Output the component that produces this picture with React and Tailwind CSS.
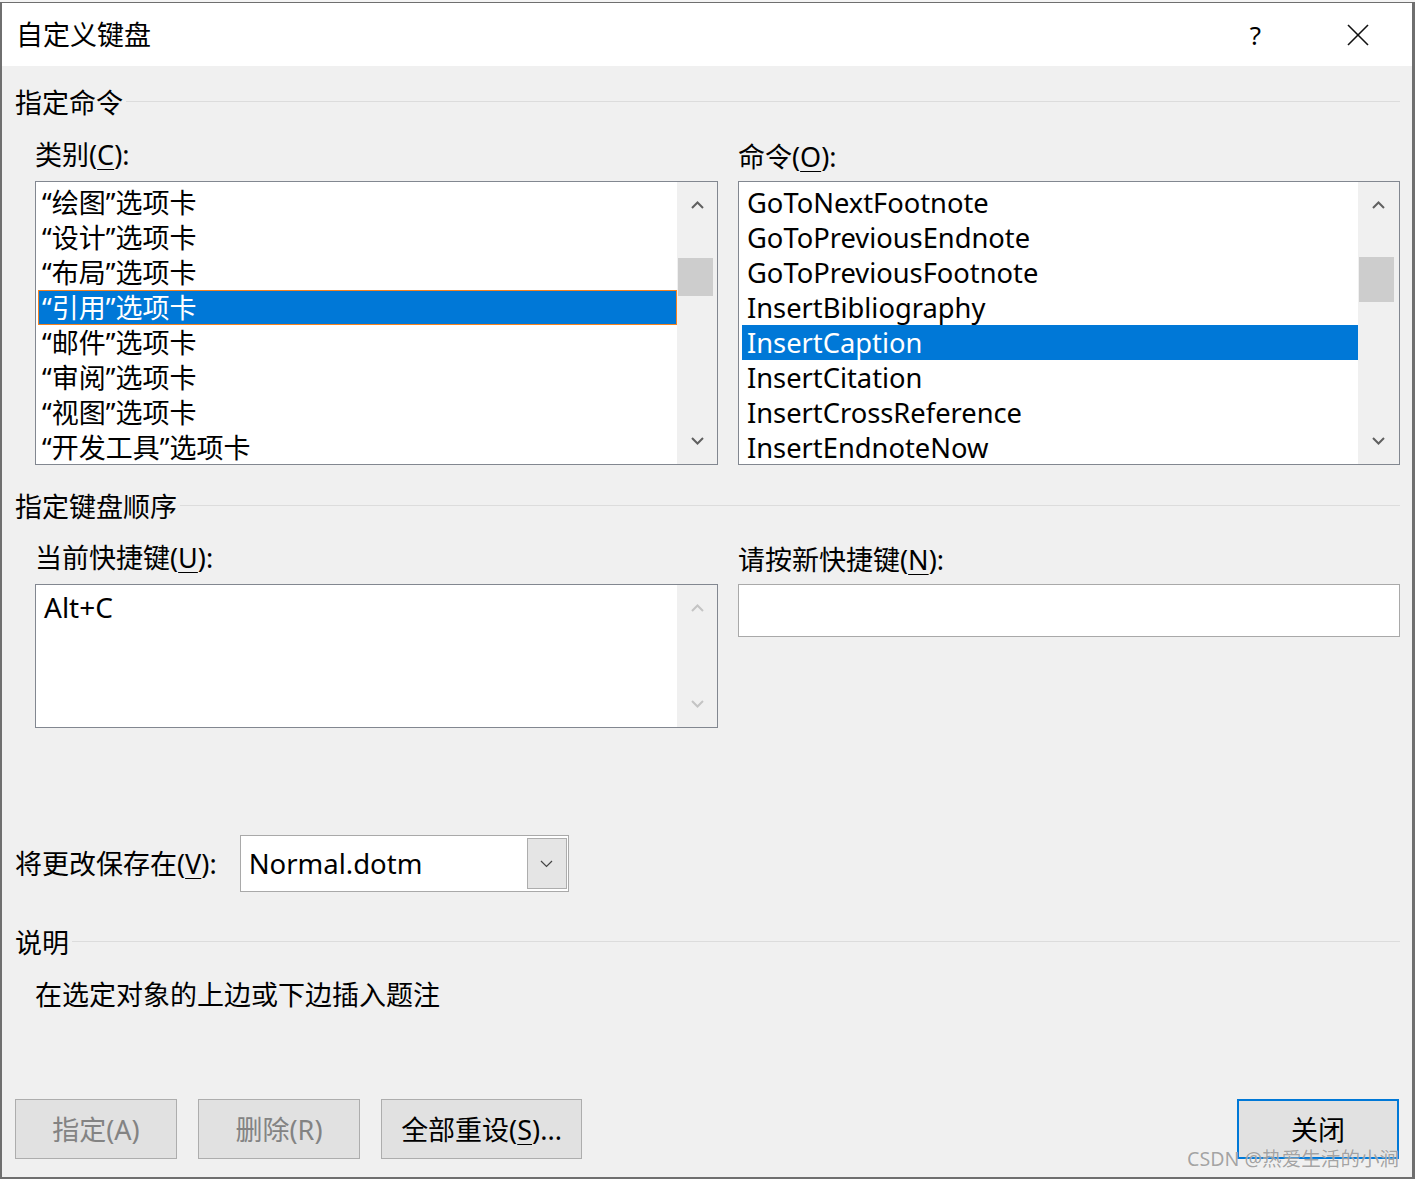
import React from "react";

const FONT = { fontFamily: '"Noto Sans", "Noto Sans CJK SC", sans-serif' };

function ChevUp({ color = "#606060" }) {
  return (
    <svg width="13" height="8" viewBox="0 0 13 8">
      <polyline points="1,7 6.5,1.5 12,7" fill="none" stroke={color} strokeWidth="2" />
    </svg>
  );
}
function ChevDown({ color = "#606060" }) {
  return (
    <svg width="13" height="8" viewBox="0 0 13 8">
      <polyline points="1,1 6.5,6.5 12,1" fill="none" stroke={color} strokeWidth="2" />
    </svg>
  );
}

function SectionHeader({ children }) {
  return (
    <div className="flex h-[32px] items-center pl-[13px] pr-[12px]">
      <span className="text-[27px] leading-none text-black whitespace-nowrap">{children}</span>
      <div className="ml-[3px] mt-[-2px] h-px flex-1 bg-[#dcdcdc]" />
    </div>
  );
}

function Label({ text, u, rest = "):" }) {
  return (
    <span className="text-[27px] leading-none text-black whitespace-nowrap">
      {text}(<span className="underline underline-offset-[4px] decoration-1">{u}</span>{rest}
    </span>
  );
}

const cats = [
  "“绘图”选项卡",
  "“设计”选项卡",
  "“布局”选项卡",
  "“引用”选项卡",
  "“邮件”选项卡",
  "“审阅”选项卡",
  "“视图”选项卡",
  "“开发工具”选项卡",
];

const cmds = [
  "GoToNextFootnote",
  "GoToPreviousEndnote",
  "GoToPreviousFootnote",
  "InsertBibliography",
  "InsertCaption",
  "InsertCitation",
  "InsertCrossReference",
  "InsertEndnoteNow",
];

function Button({ children, disabled, primary, className = "" }) {
  return (
    <div
      className={
        "flex h-[60px] items-center justify-center bg-[#e1e1e1] text-[27px] leading-none " +
        (primary ? "border-2 border-[#0078d7] " : "border border-[#adadad] ") +
        (disabled ? "text-[#838383] " : "text-black ") +
        className
      }
    >
      {children}
    </div>
  );
}

export default function App() {
  return (
    <div className="relative h-[1179px] w-[1415px] overflow-hidden bg-white" style={FONT}>
      <div className="h-[2px] bg-[#f4f4f4]" />
      <div className="flex h-[1177px] flex-col border-b-2 border-l-2 border-r-[3px] border-t border-[#6f6f6f] bg-[#f0f0f0]">
        {/* title bar */}
        <div className="flex h-[63px] items-center bg-white pl-[14px]">
          <span className="text-[27px] leading-none text-black">自定义键盘</span>
          <div className="flex-1" />
          <span className="mr-[86px] text-[26px] leading-none text-black">?</span>
          <svg width="22" height="22" viewBox="0 0 22 22" className="mr-[43px]">
            <line x1="1" y1="1" x2="21" y2="21" stroke="#111" strokeWidth="1.6" />
            <line x1="21" y1="1" x2="1" y2="21" stroke="#111" strokeWidth="1.6" />
          </svg>
        </div>

        {/* 指定命令 */}
        <div className="mt-[20px]">
          <SectionHeader>指定命令</SectionHeader>
        </div>
        <div className="mt-[22px] flex h-[32px] items-center pl-[33px]">
          <div className="w-[703px]">
            <Label text="类别" u="C" />
          </div>
          <Label text="命令" u="O" />
        </div>
        <div className="mt-[9px] flex h-[284px] pl-[33px] pr-[12px]">
          {/* categories list */}
          <div className="flex w-[683px] border border-[#828790] bg-white">
            <div className="flex-1 pt-[3px] pl-[2px]">
              {cats.map((c, i) => (
                <div
                  key={c}
                  className={
                    "flex h-[35px] items-center whitespace-nowrap pl-[3px] text-[27px] leading-none " +
                    (i === 3
                      ? "border border-[#f5821f] bg-[#0078d7] text-white"
                      : "border border-transparent text-black")
                  }
                >
                  {c}
                </div>
              ))}
            </div>
            <div className="flex w-[40px] flex-col bg-[#f0f0f0]">
              <div className="flex h-[46px] items-center justify-center">
                <ChevUp />
              </div>
              <div className="ml-[1px] mt-[30px] h-[38px] w-[35px] bg-[#cdcdcd]" />
              <div className="flex-1" />
              <div className="flex h-[46px] items-center justify-center">
                <ChevDown />
              </div>
            </div>
          </div>
          <div className="w-[20px]" />
          {/* commands list */}
          <div className="flex flex-1 border border-[#828790] bg-white">
            <div className="flex-1 overflow-hidden pt-[3px] pl-[3px]">
              {cmds.map((c, i) => (
                <div
                  key={c}
                  className={
                    "flex h-[35px] items-center whitespace-nowrap pl-[5px] text-[27.3px] leading-none " +
                    (i === 4 ? "bg-[#0078d7] text-white" : "text-black")
                  }
                >
                  {c}
                </div>
              ))}
            </div>
            <div className="flex w-[41px] flex-col bg-[#f0f0f0]">
              <div className="flex h-[46px] items-center justify-center">
                <ChevUp />
              </div>
              <div className="ml-[1px] mt-[29px] h-[45px] w-[35px] bg-[#cdcdcd]" />
              <div className="flex-1" />
              <div className="flex h-[46px] items-center justify-center">
                <ChevDown />
              </div>
            </div>
          </div>
        </div>

        {/* 指定键盘顺序 */}
        <div className="mt-[25px]">
          <SectionHeader>指定键盘顺序</SectionHeader>
        </div>
        <div className="mt-[21px] flex h-[32px] items-center pl-[33px]">
          <div className="w-[703px]">
            <Label text="当前快捷键" u="U" />
          </div>
          <Label text="请按新快捷键" u="N" />
        </div>
        <div className="mt-[9px] flex items-start pl-[33px] pr-[12px]">
          <div className="flex h-[144px] w-[683px] border border-[#828790] bg-white">
            <div className="flex-1 pl-[8px] pt-[5px]">
              <div className="flex h-[33px] items-center text-[28px] leading-none text-black">Alt+C</div>
            </div>
            <div className="flex w-[40px] flex-col justify-between bg-[#f0f0f0]">
              <div className="flex h-[46px] items-center justify-center">
                <ChevUp color="#c4c4c4" />
              </div>
              <div className="flex h-[46px] items-center justify-center">
                <ChevDown color="#c4c4c4" />
              </div>
            </div>
          </div>
          <div className="w-[20px]" />
          <div className="h-[53px] flex-1 border border-[#a9a9a9] bg-white" />
        </div>

        {/* 保存在 */}
        <div className="mt-[107px] flex h-[57px] items-center pl-[13px]">
          <Label text="将更改保存在" u="V" />
          <div className="ml-[23px] flex h-[57px] w-[329px] border border-[#a9a9a9] bg-white">
            <div className="flex flex-1 items-center pl-[8px] text-[27.5px] leading-none text-black">Normal.dotm</div>
            <div className="my-[2px] mr-[1px] flex w-[40px] items-center justify-center border border-[#adadad] bg-[#e5e5e5]">
              <svg width="13" height="8" viewBox="0 0 13 8">
                <polyline points="1,1 6.5,6.5 12,1" fill="none" stroke="#444" strokeWidth="1.2" />
              </svg>
            </div>
          </div>
        </div>

        {/* 说明 */}
        <div className="mt-[34px]">
          <SectionHeader>说明</SectionHeader>
        </div>
        <div className="mt-[20px] flex h-[32px] items-center pl-[33px] text-[27px] leading-none text-black">
          在选定对象的上边或下边插入题注
        </div>

        {/* buttons */}
        <div className="mt-[89px] flex pl-[13px] pr-[13px]">
          <Button disabled className="w-[162px]">指定(A)</Button>
          <Button disabled className="ml-[21px] w-[162px]">删除(R)</Button>
          <Button className="ml-[21px] w-[201px]">
            全部重设(<span className="underline underline-offset-[4px] decoration-1">S</span>)...
          </Button>
          <div className="flex-1" />
          <Button primary className="w-[162px]">关闭</Button>
        </div>
      </div>

      {/* watermark */}
      <div
        className="absolute left-[1187px] top-[1145px] whitespace-nowrap text-[19.6px] leading-[28px] text-[#8c8c8c]/80"
        style={{ textShadow: "0 0 1px rgba(255,255,255,0.8)" }}
      >
        CSDN @热爱生活的小涧
      </div>
    </div>
  );
}
